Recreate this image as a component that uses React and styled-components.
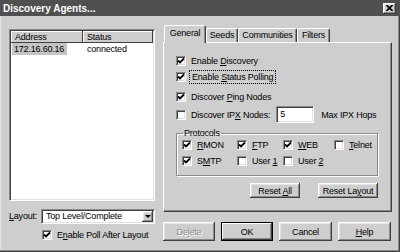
import React from "react";
import styled, { createGlobalStyle } from "styled-components";

const GlobalStyle = createGlobalStyle`
  body {
    margin: 0;
    font-family: "Liberation Sans", Arial, sans-serif;
    font-size: 9px;
    letter-spacing: -0.2px;
    color: #000;
  }
  * { box-sizing: border-box; }
`;

const raised = `
  background: #cecece;
  box-shadow: inset -1px -1px 0 #404040, inset 1px 1px 0 #fff,
    inset -2px -2px 0 #8a8a8a, inset 2px 2px 0 #e4e4e4;
`;

const sunken = `
  background: #fff;
  border: 1px solid;
  border-color: #8a8a8a #fff #fff #8a8a8a;
  box-shadow: inset 1px 1px 0 #404040, inset -1px -1px 0 #e0e0e0;
`;

const Window = styled.div`
  width: 400px;
  height: 252px;
  background: #cecece;
  display: flex;
  flex-direction: column;
`;

const TitleBar = styled.div`
  height: 16px;
  background: #505050;
  display: flex;
  align-items: center;
  justify-content: space-between;
  padding: 0 4px 0 3px;
  color: #fff;
  font-size: 10px;
  font-weight: bold;
  letter-spacing: 0;
`;

const CloseBtn = styled.div`
  width: 13px;
  height: 11px;
  ${raised}
  display: flex;
  align-items: center;
  justify-content: center;
`;

const Body = styled.div`
  flex: 1;
  display: flex;
  padding: 9px 0 0 9px;
  box-shadow: inset -1px -1px 0 #404040, inset -2px -2px 0 #8a8a8a,
    inset 1px 0 0 #e4e4e4;
`;

const LeftCol = styled.div`
  width: 146px;
  padding-top: 4px;
  display: flex;
  flex-direction: column;
`;

const ListView = styled.div`
  height: 172px;
  ${sunken}
  padding: 1px;
`;

const HeaderRow = styled.div`
  display: flex;
  height: 12px;
`;

const HeaderCell = styled.div`
  width: ${(p) => p.$w}px;
  ${raised}
  box-shadow: inset -1px -1px 0 #404040, inset 1px 1px 0 #fff;
  padding-left: 4px;
  line-height: 12px;
`;

const ListRow = styled.div`
  display: flex;
  height: 12px;
  line-height: 12px;
`;

const ListCell = styled.div`
  width: ${(p) => p.$w}px;
  padding-left: ${(p) => p.$pl}px;
`;

const Selected = styled.span`
  background: #c4c4c4;
  padding: 0 3px 0 2px;
  display: inline-block;
`;

const LayoutRow = styled.div`
  margin-top: 8px;
  height: 14px;
  display: flex;
  align-items: center;
`;

const Label = styled.div`
  width: 32px;
`;

const Combo = styled.div`
  width: 114px;
  height: 15px;
  ${sunken}
  display: flex;
  align-items: center;
  justify-content: space-between;
  padding: 1px 1px 1px 4px;
`;

const ComboArrow = styled.div`
  width: 11px;
  height: 11px;
  ${raised}
  display: flex;
  align-items: center;
  justify-content: center;

  &:after {
    content: "";
    border-left: 3px solid transparent;
    border-right: 3px solid transparent;
    border-top: 3px solid #000;
  }
`;

const RightCol = styled.div`
  width: 229px;
  margin-left: 8px;
  display: flex;
  flex-direction: column;
`;

const Tabs = styled.div`
  height: 17px;
  display: flex;
  align-items: flex-end;
  padding-left: 1px;
`;

const Tab = styled.div`
  width: ${(p) => p.$w}px;
  height: ${(p) => (p.$active ? 18 : 14)}px;
  margin-bottom: ${(p) => (p.$active ? -1 : 0)}px;
  position: relative;
  z-index: ${(p) => (p.$active ? 1 : 0)};
  background: #cecece;
  border-top: 1px solid #fff;
  border-left: 1px solid #fff;
  border-right: 1px solid #404040;
  box-shadow: inset -1px 0 0 #8a8a8a;
  border-radius: 2px 2px 0 0;
  text-align: center;
  padding-top: ${(p) => (p.$active ? 2 : 1)}px;
  line-height: 11px;
`;

const Panel = styled.div`
  height: 170px;
  border: 1px solid;
  border-color: #fff #404040 #404040 #fff;
  box-shadow: inset -1px -1px 0 #8a8a8a;
  padding: 12px 12px 0 12px;
  display: flex;
  flex-direction: column;
`;

const CheckRow = styled.div`
  display: flex;
  align-items: center;
  gap: 5px;
  height: ${(p) => p.$h || 12}px;
  margin-top: ${(p) => p.$mt || 0}px;
  padding-left: ${(p) => p.$pl || 0}px;
`;

const Box = styled.div`
  width: 10px;
  height: 10px;
  flex: none;
  ${sunken}
  display: flex;
  align-items: center;
  justify-content: center;
`;

const Focus = styled.span`
  outline: 1px dotted #000;
  outline-offset: 1px;
  padding: 0 1px;
`;

const Input = styled.div`
  width: 38px;
  height: 17px;
  ${sunken}
  margin-left: 1px;
  padding: 2px 3px;
  line-height: 11px;
`;

const After = styled.span`
  margin-left: 2px;
`;

const Group = styled.fieldset`
  margin: 5px 0 0 0;
  width: 202px;
  padding: 1px 4px 8px 5px;
  border: 1px solid #8a8a8a;
  box-shadow: 1px 1px 0 #fff, inset 1px 1px 0 #fff;
`;

const Legend = styled.legend`
  padding: 0 1px;
  margin-left: 1px;
  line-height: 10px;
`;

const ProtoGrid = styled.div`
  display: grid;
  grid-template-columns: 55px 46px 51px auto;
  row-gap: 4px;
`;

const BtnRow = styled.div`
  display: flex;
  justify-content: flex-end;
  gap: 18px;
  margin-top: 7px;
  width: 202px;
`;

const Button = styled.div`
  width: ${(p) => p.$w}px;
  height: ${(p) => p.$h}px;
  ${raised}
  ${(p) =>
    p.$default &&
    `box-shadow: inset 0 0 0 1px #000, inset -2px -2px 0 #404040, inset 2px 2px 0 #fff,
      inset -3px -3px 0 #8a8a8a;`}
  display: flex;
  align-items: center;
  justify-content: center;
  color: ${(p) => (p.$disabled ? "#8f8f8f" : "#000")};
  text-shadow: ${(p) => (p.$disabled ? "1px 1px 0 #fff" : "none")};
`;

const BottomRow = styled.div`
  display: flex;
  gap: 6px;
  margin-top: 10px;
`;

const Check = ({ on }) => (
  <Box>
    {on && (
      <svg width="8" height="8" viewBox="0 0 8 8">
        <path d="M1 3.5 L3 5.5 L7 1.5" stroke="#000" strokeWidth="1.8" fill="none" />
      </svg>
    )}
  </Box>
);

const Opt = ({ on, children, h, mt }) => (
  <CheckRow $h={h} $mt={mt}>
    <Check on={on} />
    <span>{children}</span>
  </CheckRow>
);

export default function App() {
  return (
    <>
      <GlobalStyle />
      <Window>
        <TitleBar>
          <span>Discovery Agents...</span>
          <CloseBtn>
            <svg width="7" height="6" viewBox="0 0 7 6">
              <path d="M0.5 0 L6.5 6 M6.5 0 L0.5 6" stroke="#000" strokeWidth="1.6" />
            </svg>
          </CloseBtn>
        </TitleBar>
        <Body>
          <LeftCol>
            <ListView>
              <HeaderRow>
                <HeaderCell $w={72}>Address</HeaderCell>
                <HeaderCell $w={70}>Status</HeaderCell>
              </HeaderRow>
              <ListRow>
                <ListCell $w={72} $pl={1}>
                  <Selected>172.16.60.16</Selected>
                </ListCell>
                <ListCell $w={70} $pl={4}>
                  connected
                </ListCell>
              </ListRow>
            </ListView>
            <LayoutRow>
              <Label>
                <u>L</u>ayout:
              </Label>
              <Combo>
                <span>Top Level/Complete</span>
                <ComboArrow />
              </Combo>
            </LayoutRow>
            <CheckRow $mt={6} $pl={33}>
              <Check on />
              <span>
                E<u>n</u>able Poll After Layout
              </span>
            </CheckRow>
          </LeftCol>
          <RightCol>
            <Tabs>
              <Tab $w={42} $active>
                General
              </Tab>
              <Tab $w={32}>Seeds</Tab>
              <Tab $w={59}>Communities</Tab>
              <Tab $w={33}>Filters</Tab>
            </Tabs>
            <Panel>
              <Opt on>
                Enable <u>D</u>iscovery
              </Opt>
              <CheckRow $mt={4}>
                <Check on />
                <Focus>
                  Enable <u>S</u>tatus Polling
                </Focus>
              </CheckRow>
              <Opt on mt={8}>
                Discover <u>P</u>ing Nodes
              </Opt>
              <CheckRow $mt={3} $h={17}>
                <Check />
                <span>
                  Discover IP<u>X</u> Nodes:
                </span>
                <Input>5</Input>
                <After>Max IPX Hops</After>
              </CheckRow>
              <Group>
                <Legend>Protocols</Legend>
                <ProtoGrid>
                  <Opt on>
                    <u>R</u>MON
                  </Opt>
                  <Opt on>
                    <u>F</u>TP
                  </Opt>
                  <Opt on>
                    <u>W</u>EB
                  </Opt>
                  <Opt>
                    <u>T</u>elnet
                  </Opt>
                  <Opt on>
                    S<u>M</u>TP
                  </Opt>
                  <Opt>
                    User <u>1</u>
                  </Opt>
                  <Opt>
                    User <u>2</u>
                  </Opt>
                </ProtoGrid>
              </Group>
              <BtnRow>
                <Button $w={50} $h={15}>
                  <span>
                    Reset <u>A</u>ll
                  </span>
                </Button>
                <Button $w={60} $h={15}>
                  <span>
                    Reset La<u>y</u>out
                  </span>
                </Button>
              </BtnRow>
            </Panel>
            <BottomRow>
              <Button $w={52} $h={19} $disabled>
                <span>
                  De<u>l</u>ete
                </span>
              </Button>
              <Button $w={52} $h={19} $default>
                OK
              </Button>
              <Button $w={53} $h={19}>
                Cancel
              </Button>
              <Button $w={53} $h={19}>
                <span>
                  <u>H</u>elp
                </span>
              </Button>
            </BottomRow>
          </RightCol>
        </Body>
      </Window>
    </>
  );
}
